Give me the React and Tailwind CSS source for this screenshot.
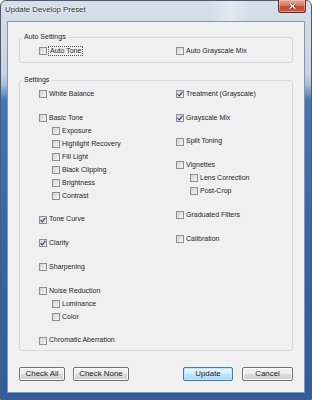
import React from "react";

const LEFT = [
  { label: "White Balance" },
  {
    label: "Basic Tone",
    sub: ["Exposure", "Highlight Recovery", "Fill Light", "Black Clipping", "Brightness", "Contrast"],
  },
  { label: "Tone Curve", checked: true },
  { label: "Clarity", checked: true },
  { label: "Sharpening" },
  { label: "Noise Reduction", sub: ["Luminance", "Color"] },
  { label: "Chromatic Aberration" },
];

const RIGHT = [
  { label: "Treatment (Grayscale)", checked: true },
  { label: "Grayscale Mix", checked: true },
  { label: "Split Toning" },
  { label: "Vignettes", sub: ["Lens Correction", "Post-Crop"] },
  { label: "Graduated Filters" },
  { label: "Calibration" },
];

function CheckRow({ label, checked, focus }) {
  return (
    <div className="flex h-[13px] items-center gap-[2px] whitespace-nowrap">
      <span className="flex h-[8px] w-[8px] shrink-0 items-center justify-center border border-[#8e8f8f] bg-[linear-gradient(135deg,#cfd2d6,#f6f6f6)]">
        {checked && (
          <svg width="6" height="6" viewBox="0 0 6 6">
            <path d="M0.6 3.1 L2.3 4.9 L5.4 0.8" fill="none" stroke="#2f4574" strokeWidth="1.2" />
          </svg>
        )}
      </span>
      <span className={focus ? "px-[1px] leading-[8px] outline outline-1 outline-dotted outline-[#555]" : ""}>
        {label}
      </span>
    </div>
  );
}

function Column({ items, indent }) {
  return (
    <div className="flex flex-col gap-[10.75px]">
      {items.map((it) => (
        <div key={it.label} className="flex flex-col">
          <CheckRow label={it.label} checked={it.checked} />
          {it.sub && (
            <div className={indent}>
              {it.sub.map((s) => (
                <CheckRow key={s} label={s} />
              ))}
            </div>
          )}
        </div>
      ))}
    </div>
  );
}

function WinButton({ children, width, primary }) {
  const look = primary
    ? "border-[#3c7fb1] bg-[linear-gradient(to_bottom,#eaf6fd_0%,#d9f0fc_50%,#bee6fd_51%,#a7d9f5_100%)] shadow-[inset_0_0_0_1px_#c4e5f6]"
    : "border-[#707070] bg-[linear-gradient(to_bottom,#f2f2f2_0%,#ebebeb_50%,#dddddd_51%,#cfcfcf_100%)] shadow-[inset_0_0_0_1px_#fcfcfc]";
  return (
    <button
      className={`flex h-[14px] items-center justify-center rounded-[2px] border text-[7.9px] leading-none text-[#1a1a1a] ${look} ${width}`}
    >
      {children}
    </button>
  );
}

export default function App() {
  return (
    <div className="h-[400px] w-[312px] overflow-hidden bg-white font-['Liberation_Sans',Arial,sans-serif]">
      <div className="relative flex h-[400px] w-[312px] flex-col rounded-t-[6px] border border-[#4a5b70] bg-[linear-gradient(to_bottom,#d7e0ea_0%,#c8d4e1_18%,#a9bed6_21%,#4675b3_25%,#3665a6_60%,#2f5d9d_100%)]">
        {/* title bar */}
        <div className="flex h-[20px] items-start justify-between bg-[linear-gradient(to_right,transparent_0%,transparent_68%,rgba(255,255,255,0.35)_74%,transparent_80%)] pl-[4px] pr-[5px]">
          <span className="mt-[4px] text-[7.8px] leading-[10px] text-[#2b2b2b] [text-shadow:0_0_3px_#ffffff,0_0_2px_#ffffff]">
            Update Develop Preset
          </span>
          <div className="-mt-px flex h-[13px] w-[28px] items-center justify-center rounded-b-[3px] border border-t-0 border-[#6b2a1e] bg-[linear-gradient(to_bottom,#e6a596_0%,#d47a68_45%,#c24a32_55%,#c65b40_100%)] shadow-[inset_0_0_0_1px_rgba(255,210,200,0.5)]">
            <svg width="7" height="6" viewBox="0 0 7 6">
              <path d="M1 0.8 L6 5.2 M6 0.8 L1 5.2" stroke="#5a1d12" strokeWidth="2.4" strokeLinecap="square" />
              <path d="M1 0.8 L6 5.2 M6 0.8 L1 5.2" stroke="#ffffff" strokeWidth="1.4" strokeLinecap="square" />
            </svg>
          </div>
        </div>

        {/* client area */}
        <div className="mx-[6px] flex h-[372px] flex-col border border-[#8298b3] bg-[#f0f0f0] px-[11px] pt-[10px] text-[7px] text-[#1e1e1e]">
          <fieldset className="h-[31px] rounded-[3px] border border-[#d3dae0] pb-[4.5px] pl-[19px]">
            <legend className="-ml-[17px] px-[2px] leading-[10px]">Auto Settings</legend>
            <div className="mt-[2.5px] grid grid-cols-[137px_1fr]">
              <CheckRow label="Auto Tone" focus />
              <CheckRow label="Auto Grayscale Mix" />
            </div>
          </fieldset>

          <fieldset className="mt-[12px] h-[276px] rounded-[3px] border border-[#d3dae0] pl-[19px]">
            <legend className="-ml-[17px] px-[2px] leading-[10px]">Settings</legend>
            <div className="mt-[2.5px] grid grid-cols-[137px_1fr] items-start">
              <Column items={LEFT} indent="pl-[13px]" />
              <Column items={RIGHT} indent="pl-[14px]" />
            </div>
          </fieldset>

          <div className="mt-[16px] flex justify-between">
            <div className="flex gap-[8px]">
              <WinButton width="w-[46px]">Check All</WinButton>
              <WinButton width="w-[56px]">Check None</WinButton>
            </div>
            <div className="flex gap-[9px]">
              <WinButton width="w-[50px]" primary>
                Update
              </WinButton>
              <WinButton width="w-[51px]">Cancel</WinButton>
            </div>
          </div>
        </div>
      </div>
    </div>
  );
}
